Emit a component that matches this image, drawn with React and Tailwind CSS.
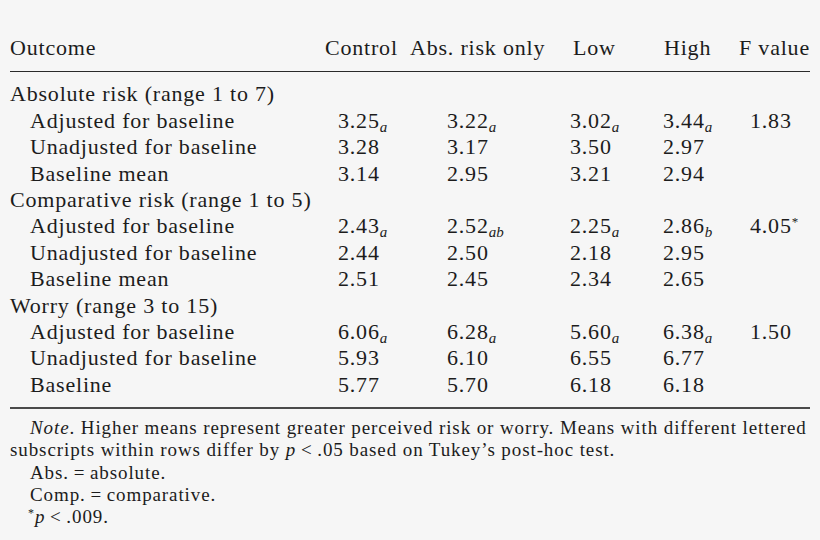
const groups = [
  {
    title: 'Absolute risk (range 1 to 7)',
    rows: [
      { label: 'Adjusted for baseline', vals: [['3.25', 'a'], ['3.22', 'a'], ['3.02', 'a'], ['3.44', 'a']], f: '1.83' },
      { label: 'Unadjusted for baseline', vals: [['3.28'], ['3.17'], ['3.50'], ['2.97']] },
      { label: 'Baseline mean', vals: [['3.14'], ['2.95'], ['3.21'], ['2.94']] },
    ],
  },
  {
    title: 'Comparative risk (range 1 to 5)',
    rows: [
      { label: 'Adjusted for baseline', vals: [['2.43', 'a'], ['2.52', 'ab'], ['2.25', 'a'], ['2.86', 'b']], f: '4.05', star: true },
      { label: 'Unadjusted for baseline', vals: [['2.44'], ['2.50'], ['2.18'], ['2.95']] },
      { label: 'Baseline mean', vals: [['2.51'], ['2.45'], ['2.34'], ['2.65']] },
    ],
  },
  {
    title: 'Worry (range 3 to 15)',
    rows: [
      { label: 'Adjusted for baseline', vals: [['6.06', 'a'], ['6.28', 'a'], ['5.60', 'a'], ['6.38', 'a']], f: '1.50' },
      { label: 'Unadjusted for baseline', vals: [['5.93'], ['6.10'], ['6.55'], ['6.77']] },
      { label: 'Baseline', vals: [['5.77'], ['5.70'], ['6.18'], ['6.18']] },
    ],
  },
];

const grid = 'grid grid-cols-[315px_85px_150px_95px_80px_1fr] h-[26.4px] leading-[26.4px] whitespace-nowrap';
const valuePad = ['pl-[13px]', 'pl-[37px]', 'pl-[10px]', 'pl-[8px]'];

function Value({ v }) {
  return (
    <span>
      {v[0]}
      {v[1] && <sub className="italic text-[15px] tracking-normal bottom-[-0.25em]">{v[1]}</sub>}
    </span>
  );
}

export default function App() {
  return (
    <div className="w-[820px] h-[540px] bg-[#f6f6f6] text-[#1c1c1c] [font-family:'Liberation_Serif','Times_New_Roman',serif] text-[22px] tracking-[0.8px] px-[10px] pt-[35px] overflow-hidden">
      <div className={grid}>
        <div>Outcome</div>
        <div>Control</div>
        <div>Abs. risk only</div>
        <div className="pl-[13px]">Low</div>
        <div className="pl-[9px]">High</div>
        <div className="pl-[4px]">F value</div>
      </div>
      <div className="mt-[10px] border-t border-[#2a2a2a]" />

      <div className="pt-[9px]">
        {groups.map((g) => (
          <div key={g.title}>
            <div className={grid}>
              <div className="col-span-6">{g.title}</div>
            </div>
            {g.rows.map((r) => (
              <div key={r.label} className={grid}>
                <div className="pl-[20px]">{r.label}</div>
                {r.vals.map((v, i) => (
                  <div key={i} className={valuePad[i]}>
                    <Value v={v} />
                  </div>
                ))}
                <div className="pl-[15px]">
                  {r.f}
                  {r.star && <sup className="text-[13px] top-[-0.6em]">*</sup>}
                </div>
              </div>
            ))}
          </div>
        ))}
      </div>

      <div className="mt-[9px] border-t-2 border-[#4a4a4a]" />

      <div className="pt-[8px] text-[19px] leading-[22.3px] tracking-[0.9px] whitespace-nowrap">
        <div className="pl-[20px]">
          <i>Note</i>. Higher means represent greater perceived risk or worry. Means with different lettered
        </div>
        <div>
          subscripts within rows differ by <i>p</i>&thinsp;&lt;&thinsp;.05 based on Tukey’s post-hoc test.
        </div>
        <div className="pl-[20px]">Abs.&thinsp;=&thinsp;absolute.</div>
        <div className="pl-[20px]">Comp.&thinsp;=&thinsp;comparative.</div>
        <div className="pl-[18px]">
          <sup className="text-[12px]">*</sup>
          <i>p</i>&thinsp;&lt;&thinsp;.009.
        </div>
      </div>
    </div>
  );
}
